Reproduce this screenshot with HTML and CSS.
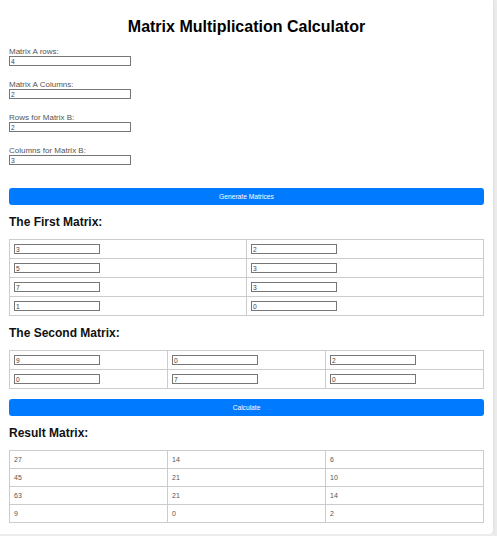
FILE: index.html
```html
<!DOCTYPE html>
<html>
<head>
<meta charset="utf-8">
<title>Matrix Multiplication Calculator</title>
<link rel="stylesheet" href="styles.css">
</head>
<body>
<div class="container">
  <h1 class="title">Matrix Multiplication Calculator</h1>
  <div class="group"><label class="lbl">Matrix A rows:</label><input class="num" type="text" value="4"></div>
  <div class="group"><label class="lbl">Matrix A Columns:</label><input class="num" type="text" value="2"></div>
  <div class="group"><label class="lbl">Rows for Matrix B:</label><input class="num" type="text" value="2"></div>
  <div class="group group-last"><label class="lbl">Columns for Matrix B:</label><input class="num" type="text" value="3"></div>
  <button class="btn">Generate Matrices</button>

  <h2 class="sub">The First Matrix:</h2>
  <table class="matrix">
    <tr><td><input class="cell" type="text" value="3"></td><td><input class="cell" type="text" value="2"></td></tr>
    <tr><td><input class="cell" type="text" value="5"></td><td><input class="cell" type="text" value="3"></td></tr>
    <tr><td><input class="cell" type="text" value="7"></td><td><input class="cell" type="text" value="3"></td></tr>
    <tr><td><input class="cell" type="text" value="1"></td><td><input class="cell" type="text" value="0"></td></tr>
  </table>

  <h2 class="sub">The Second Matrix:</h2>
  <table class="matrix">
    <tr><td><input class="cell" type="text" value="9"></td><td><input class="cell" type="text" value="0"></td><td><input class="cell" type="text" value="2"></td></tr>
    <tr><td><input class="cell" type="text" value="0"></td><td><input class="cell" type="text" value="7"></td><td><input class="cell" type="text" value="0"></td></tr>
  </table>

  <button class="btn">Calculate</button>

  <h2 class="sub">Result Matrix:</h2>
  <table class="matrix result">
    <tr><td>27</td><td>14</td><td>6</td></tr>
    <tr><td>45</td><td>21</td><td>10</td></tr>
    <tr><td>63</td><td>21</td><td>14</td></tr>
    <tr><td>9</td><td>0</td><td>2</td></tr>
  </table>
</div>
</body>
</html>
```

FILE: styles.css
```css
html, body {
  margin: 0;
  padding: 0;
}
body {
  background: #ececec;
  font-family: "Liberation Sans", Arial, sans-serif;
  color: #333;
}
.container {
  width: 475px;
  padding: 9px 9px 11px 9px;
  background: #fff;
  border-radius: 0 0 4px 0;
  box-shadow: 0 0 4px rgba(0, 0, 0, 0.08);
}
.title {
  font-size: 16px;
  line-height: 18px;
  font-weight: bold;
  color: #000;
  text-align: center;
  margin: 9px 0 11px;
}
.group {
  margin-bottom: 14px;
}
.group-last {
  margin-bottom: 23px;
}
.lbl {
  display: block;
  font-size: 8px;
  line-height: 9px;
  color: #555;
}
.num, .cell {
  box-sizing: border-box;
  display: block;
  height: 10px;
  border: 1px solid #767676;
  padding: 0 1px;
  margin: 0;
  font-family: "Liberation Sans", Arial, sans-serif;
  font-size: 6.67px;
  line-height: 8px;
  color: #444;
  background: #fff;
  outline: none;
}
.num {
  width: 122px;
}
.cell {
  width: 86px;
}
.btn {
  display: block;
  width: 100%;
  height: 17px;
  margin: 10px 0;
  padding: 0;
  border: none;
  border-radius: 3px;
  background: #007bff;
  color: #fff;
  font-family: "Liberation Sans", Arial, sans-serif;
  font-size: 6.67px;
}
.sub {
  font-size: 12px;
  font-weight: bold;
  color: #111;
  line-height: 14px;
  margin: 10px 0;
}
.matrix {
  width: 100%;
  table-layout: fixed;
  border-collapse: collapse;
}
.matrix td {
  border: 1px solid #ccc;
  padding: 4px;
  vertical-align: middle;
}
.result td {
  font-size: 7px;
  line-height: 9px;
  color: #555;
}
```
